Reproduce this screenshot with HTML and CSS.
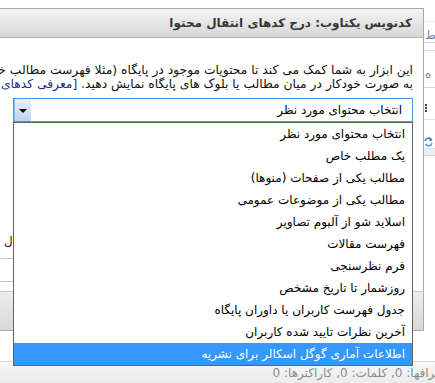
FILE: index.html
```html
<!DOCTYPE html>
<html lang="fa">
<head>
  <meta charset="UTF-8">
  <meta name="viewport" content="width=device-width, initial-scale=1">
  <title>کدنویس یکتاوب</title>
  <link rel="stylesheet" href="styles.css">
</head>
<body>
  <div class="editor">
    <div class="editor-main">
      <div class="editor-side">
        <div class="side-row side-top"></div>
        <div class="side-row side-word">ط</div>
        <div class="side-row side-thin"></div>
        <div class="side-row side-word side-tall">ه</div>
        <div class="side-row side-grip"><span class="grip"></span></div>
        <div class="side-row side-icon">
          <svg width="9" height="10" viewBox="0 0 9 10"><path d="M1 4 A3.5 3.5 0 0 1 7.5 3" fill="none" stroke="#4a7fc4" stroke-width="1.6"/><path d="M8 6 A3.5 3.5 0 0 1 1.5 7" fill="none" stroke="#6f9bd6" stroke-width="1.6"/><path d="M6 0.5 L8.5 3.5 L5 4 Z" fill="#4a7fc4"/></svg>
        </div>
        <div class="side-row side-band"></div>
      </div>
    </div>
    <div class="status-bar"><span dir="rtl">پاراگرافها: 0, کلمات: 0, کاراکترها: 0</span></div>
  </div>

  <div class="dialog">
    <div class="dialog-title" dir="rtl">کدنویس یکتاوب: درج کدهای انتقال محتوا</div>
    <div class="dialog-body">
      <p class="intro" dir="rtl">این ابزار به شما کمک می کند تا محتویات موجود در پایگاه (مثلا فهرست مطالب خاص، مطالب یک صفحه یا یک موضوع) را</p>
      <p class="intro" dir="rtl">به صورت خودکار در میان مطالب یا بلوک های پایگاه نمایش دهید. <a href="#">[معرفی کدهای بیشتر]</a></p>

      <div class="picker">
        <div class="picker-box">
          <span class="picker-btn"><span class="picker-arrow"></span></span>
          <span class="picker-value" dir="rtl">انتخاب محتوای مورد نظر</span>
        </div>
        <ul class="picker-list" dir="rtl">
          <li>انتخاب محتوای مورد نظر</li>
          <li>یک مطلب خاص</li>
          <li>مطالب یکی از صفحات (منوها)</li>
          <li>مطالب یکی از موضوعات عمومی</li>
          <li>اسلاید شو از آلبوم تصاویر</li>
          <li>فهرست مقالات</li>
          <li>فرم نظرسنجی</li>
          <li>روزشمار تا تاریخ مشخص</li>
          <li>جدول فهرست کاربران یا داوران پایگاه</li>
          <li>آخرین نظرات تایید شده کاربران</li>
          <li class="selected">اطلاعات آماری گوگل اسکالر برای نشریه</li>
        </ul>
      </div>

      <div class="field-label">ل</div>
      <div class="field-input"></div>
    </div>
    <div class="dialog-footer"></div>
  </div>
</body>
</html>
```

FILE: styles.css
```css
html, body {
  margin: 0;
  padding: 0;
  background-color: #ffffff;
  color: #1a1a1a;
  font-family: 'DejaVu Sans', sans-serif;
}

body {
  width: 435px;
  height: 383px;
  overflow: hidden;
  position: relative;
}

/* editor behind the dialog */
.editor {
  display: flex;
  flex-direction: column;
  height: 383px;
}

.editor-main {
  flex: 1;
  display: flex;
  justify-content: flex-end;
}

.editor-side {
  width: 12px;
  display: flex;
  flex-direction: column;
  overflow: hidden;
}

.side-row {
  border-bottom: 1px solid #e2e2e2;
  flex: none;
}

.side-top {
  height: 21px;
  border-bottom-color: #ececec;
}

.side-word {
  height: 20px;
  padding-left: 2px;
  font-size: 12px;
  line-height: 26px;
  color: #7486a8;
  border-bottom-color: #d6d6d6;
}

.side-thin {
  height: 7px;
}

.side-tall {
  height: 36px;
  line-height: 46px;
}

.side-grip {
  height: 31px;
}

.grip {
  display: block;
  width: 2px;
  height: 8px;
  margin: 16px 0 0 2px;
  border-left: 2px dotted #444;
}

.side-icon {
  height: 29px;
  padding: 12px 0 0 1px;
  box-sizing: border-box;
}

.side-band {
  height: 6px;
  background-color: #efefef;
  border-bottom-color: #d4d4d4;
}

.status-bar {
  height: 21px;
  border-top: 1px solid #d9d9d9;
  background: linear-gradient(#f7f7f7, #ebebeb);
  display: flex;
  justify-content: flex-end;
  align-items: center;
  font-size: 12px;
  color: #8c8c8c;
  white-space: nowrap;
}

.status-bar span {
  margin-right: -22px;
}

/* the dialog */
.dialog {
  position: absolute;
  top: 8px;
  right: 11px;
  width: 640px;
  height: 323px;
  box-sizing: border-box;
  border: 1px solid #a9a9a9;
  background-color: #ffffff;
  display: flex;
  flex-direction: column;
}

.dialog-title {
  height: 28px;
  line-height: 28px;
  padding-right: 11px;
  border-bottom: 1px solid #b3b3b3;
  background: linear-gradient(#f5f5f5, #d6d6d6);
  font-size: 12px;
  font-weight: bold;
  color: #383838;
  white-space: nowrap;
}

.dialog-body {
  flex: 1;
  padding: 25px 10px 0 0;
}

.intro {
  margin: 0;
  font-size: 12.3px;
  line-height: 14px;
  white-space: nowrap;
  color: #111;
}

.intro a {
  color: #1c2f8c;
  text-decoration: none;
}

.picker {
  position: relative;
  width: 400px;
  margin: 7px 0 0 auto;
}

.picker-box {
  height: 24px;
  box-sizing: border-box;
  border: 1px solid #4b93df;
  display: flex;
  background-color: #ffffff;
}

.picker-btn {
  width: 16px;
  border-left: 1px solid #8fb8e6;
  background: linear-gradient(#e8f1fb, #b9d5f3);
  display: flex;
  align-items: center;
  justify-content: center;
}

.picker-arrow {
  width: 0;
  height: 0;
  margin-top: 2px;
  border-left: 4px solid transparent;
  border-right: 4px solid transparent;
  border-top: 4px solid #000000;
}

.picker-value {
  flex: 1;
  text-align: right;
  padding-right: 10px;
  font-size: 12px;
  line-height: 22px;
  color: #000000;
}

.picker-list {
  position: absolute;
  top: 100%;
  left: 0;
  right: 0;
  z-index: 2;
  list-style: none;
  margin: 0;
  padding: 0;
  border: 1px solid #646464;
  background-color: #ffffff;
}

.picker-list li {
  height: 22px;
  line-height: 22px;
  padding-right: 7px;
  font-size: 12px;
  color: #000000;
  white-space: nowrap;
}

.picker-list .selected {
  background-color: #3399ff;
  color: #ffffff;
}

.field-label {
  width: 409px;
  margin: 112px 0 0 auto;
  padding-left: 3px;
  height: 14px;
  font-size: 12px;
  line-height: 14px;
  color: #222;
}

.field-input {
  height: 24px;
  margin-top: 10px;
  box-sizing: border-box;
  border: 1px solid #c6c6c6;
}

.dialog-footer {
  height: 39px;
  box-sizing: border-box;
  border-top: 1px solid #cacaca;
  background: linear-gradient(#ececec, #d9d9d9);
}
```
